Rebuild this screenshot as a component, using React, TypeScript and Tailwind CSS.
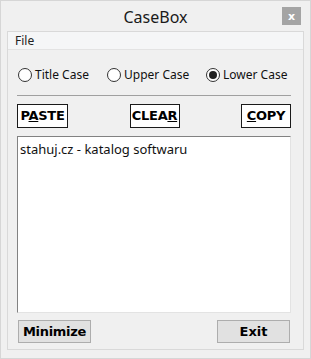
import React, { useState } from 'react';

const ui = { fontFamily: '"Noto Sans", "Open Sans", sans-serif' };
const btn = { fontFamily: '"DejaVu Sans", Verdana, sans-serif' };

const Radio = ({ label, checked, onClick }: { label: string; checked: boolean; onClick: () => void }) => (
  <label className="flex items-center gap-[3px] cursor-default whitespace-nowrap" onClick={onClick}>
    <span className="w-[14px] h-[14px] rounded-full border border-[#333] bg-white flex items-center justify-center">
      {checked && <span className="w-[8px] h-[8px] rounded-full bg-[#222]" />}
    </span>
    <span className="text-[12px] text-[#111] leading-none">{label}</span>
  </label>
);

const App = () => {
  const [mode, setMode] = useState('lower');
  const [text, setText] = useState('stahuj.cz - katalog softwaru');

  return (
    <div className="w-[311px] h-[359px] bg-[#f0f0f0] border border-[#d6d6d6] flex flex-col" style={ui}>
      <div className="h-[30px] flex items-center relative">
        <div className="flex-1 text-center text-[16px] text-[#1a1a1a] pt-[1px]">CaseBox</div>
        <div className="absolute right-[9px] top-[6px] w-[19px] h-[18px] bg-[#a4a4a4] flex items-center justify-center text-white text-[11px] font-bold leading-none" style={btn}>
          x
        </div>
      </div>
      <div className="mx-[6px] mb-[8px] flex-1 border border-[#d9d9d9] flex flex-col">
        <div className="h-[18px] bg-[#f5f6f7] border-b border-[#e3e3e3] flex items-center px-[7px] text-[12px] text-[#222]">
          File
        </div>
        <div className="flex-1 pl-[9px] pr-[12px] flex flex-col">
          <div className="flex items-center pt-[18px] pb-[13px] pl-[1px]">
            <div className="w-[89px] shrink-0">
              <Radio label="Title Case" checked={mode === 'title'} onClick={() => setMode('title')} />
            </div>
            <div className="w-[99px] shrink-0">
              <Radio label="Upper Case" checked={mode === 'upper'} onClick={() => setMode('upper')} />
            </div>
            <Radio label="Lower Case" checked={mode === 'lower'} onClick={() => setMode('lower')} />
          </div>
          <div className="h-px bg-[#a0a0a0]" />
          <div className="flex justify-between pt-[8px] pb-[8px]" style={btn}>
            <button className="w-[51px] h-[24px] border border-[#1a1a1a] bg-white text-[13px] font-bold text-black tracking-[-0.3px]">
              P<u>A</u>STE
            </button>
            <button className="w-[50px] h-[24px] border border-[#1a1a1a] bg-white text-[13px] font-bold text-black tracking-[-0.3px]">
              CLEA<u>R</u>
            </button>
            <button className="w-[50px] h-[24px] border border-[#1a1a1a] bg-white text-[13px] font-bold text-black tracking-[-0.3px]">
              <u>C</u>OPY
            </button>
          </div>
          <textarea
            value={text}
            onChange={(e) => setText(e.target.value)}
            className="h-[177px] w-full resize-none bg-white border border-[#828282] border-r-[#e3e3e3] border-b-[#e3e3e3] px-[2px] py-[4px] text-[13px] text-[#111] leading-[16px] outline-none"
            style={ui}
          />
          <div className="flex justify-between pt-[7px] px-[1px]" style={btn}>
            <button className="w-[73px] h-[23px] border border-[#adadad] bg-[#e1e1e1] text-[13px] font-bold text-black tracking-[-0.3px]">
              Minimize
            </button>
            <button className="w-[73px] h-[23px] border border-[#adadad] bg-[#e1e1e1] text-[13px] font-bold text-black">
              Exit
            </button>
          </div>
        </div>
      </div>
    </div>
  );
};

export default App;
